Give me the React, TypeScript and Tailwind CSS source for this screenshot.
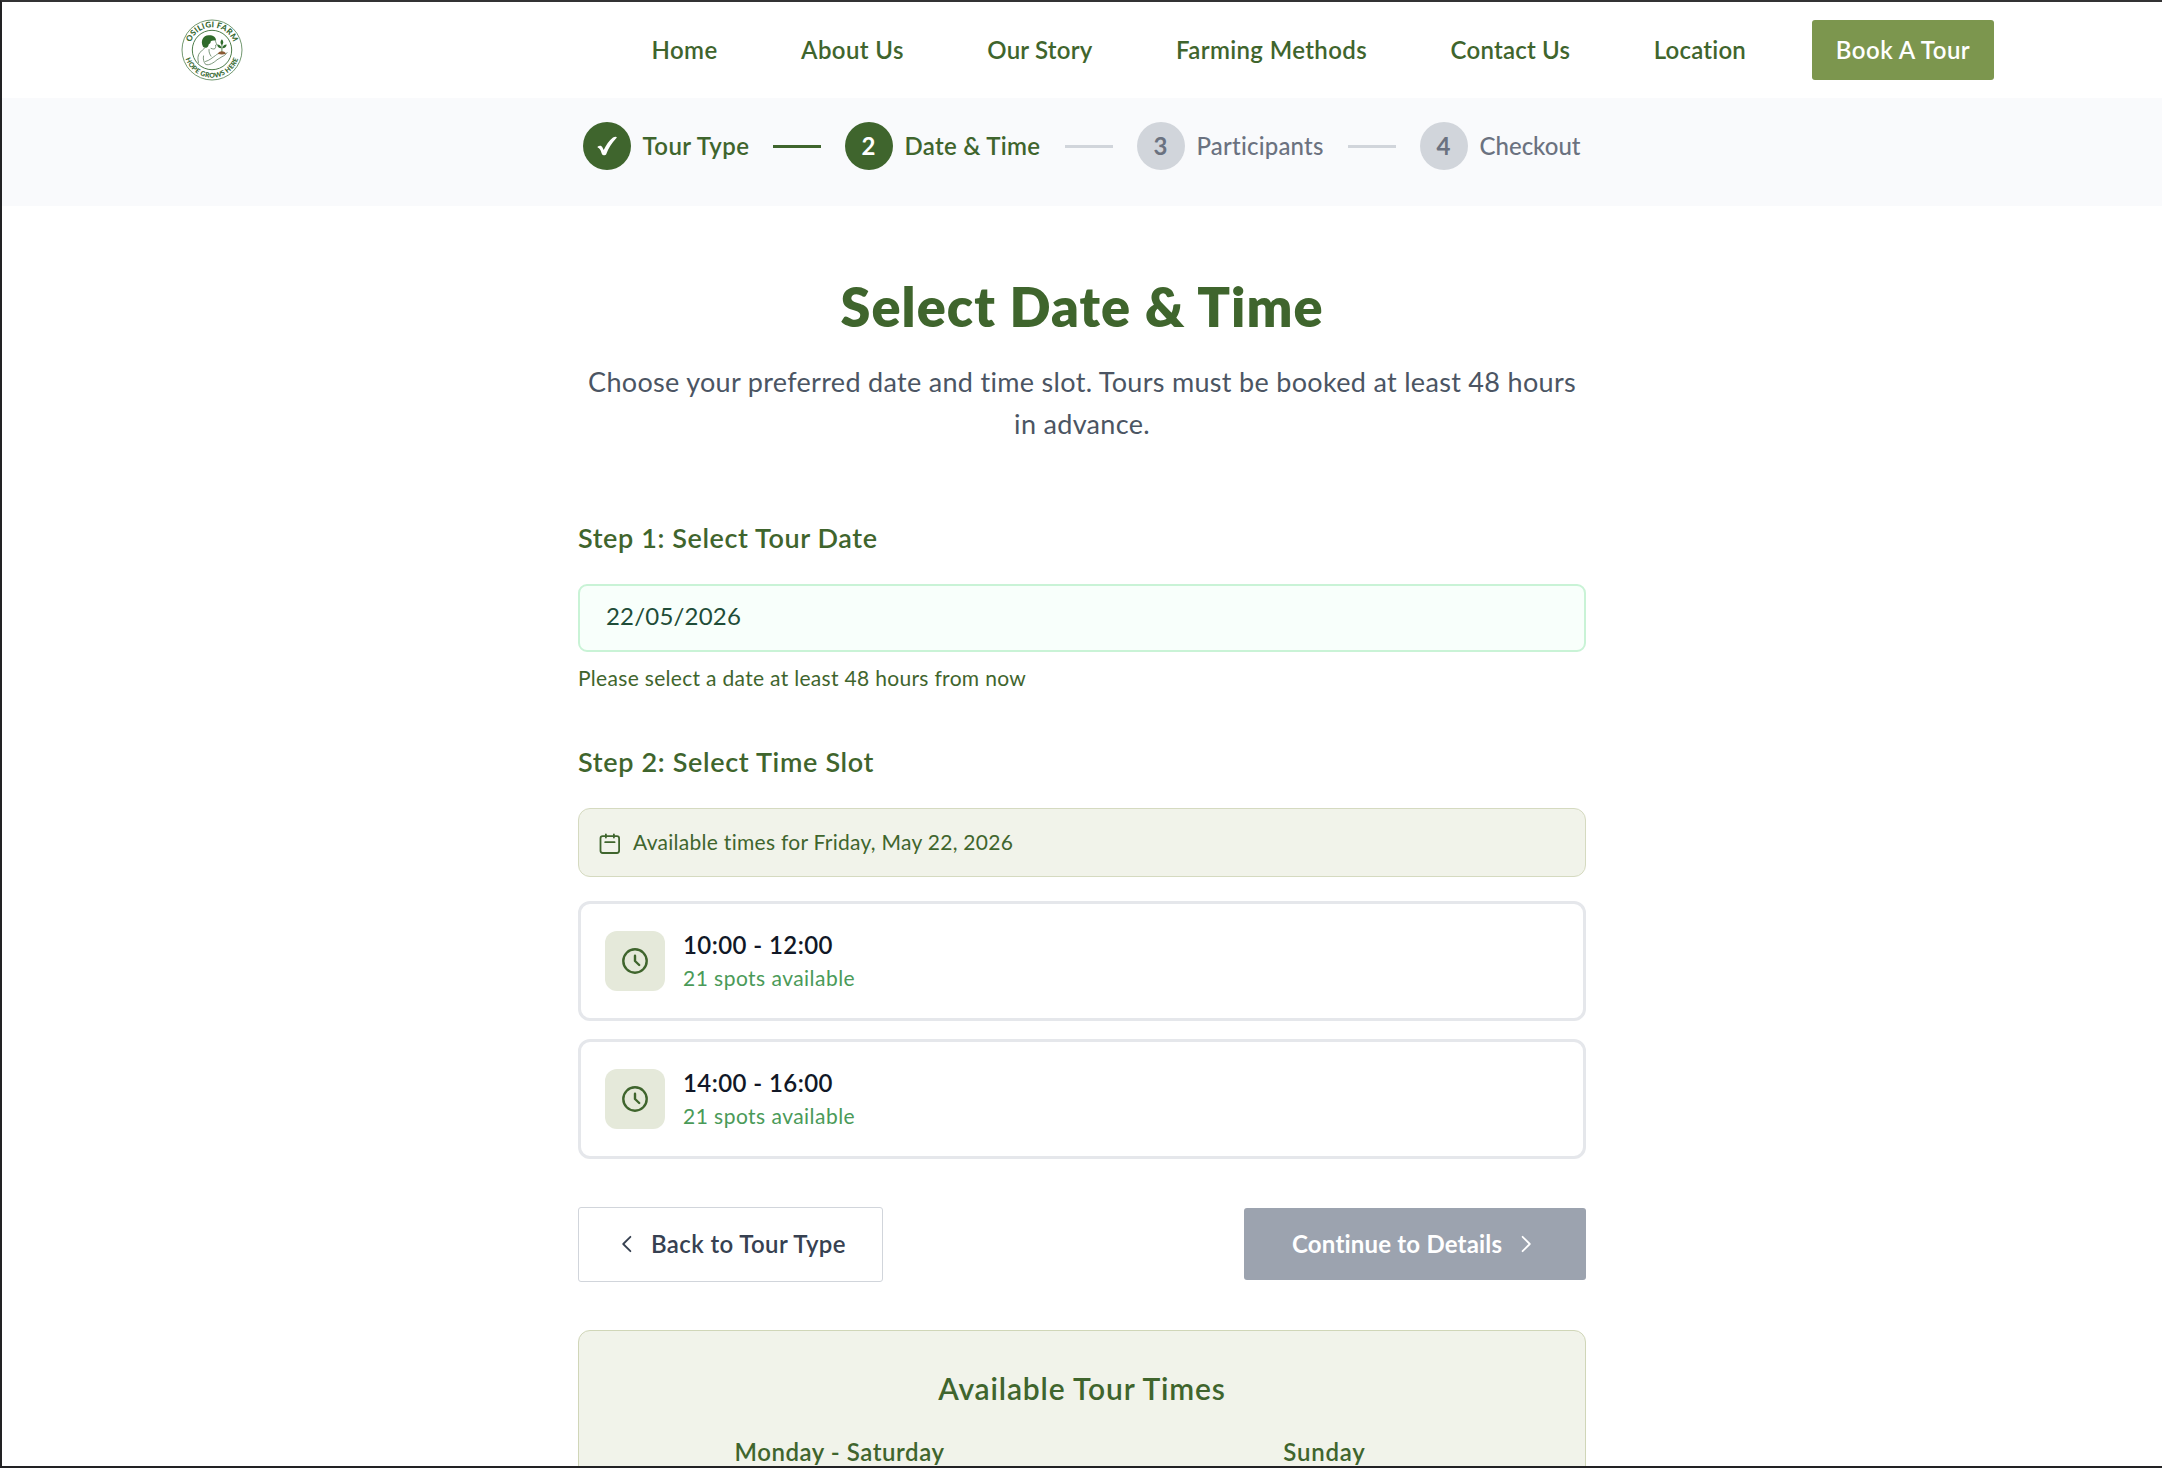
type StepStatus = "done" | "current" | "upcoming";

// Main navigation
const navLinks = [
  { label: "Home", className: "tracking-[0.4px]" },
  { label: "About Us", className: "tracking-[0.4px]" },
  { label: "Our Story", className: "tracking-[0.2px]" },
  { label: "Farming Methods", className: "tracking-[0.38px]" },
  { label: "Contact Us", className: "tracking-[0.22px]" },
  { label: "Location", className: "tracking-[0.2px]" },
];

// Booking steps
const steps: { label: string; status: StepStatus; className: string }[] = [
  { label: "Tour Type", status: "done", className: "w-[106px] tracking-[0.4px]" },
  { label: "Date & Time", status: "current", className: "w-[136px] tracking-[0.3px]" },
  { label: "Participants", status: "upcoming", className: "w-[127px] tracking-[0.2px]" },
  { label: "Checkout", status: "upcoming", className: "w-[102px]" },
];

const timeSlots = [
  { time: "10:00 - 12:00", spots: 21 },
  { time: "14:00 - 16:00", spots: 21 },
];

const schedule = [
  { days: "Monday - Saturday", className: "tracking-[0.55px]" },
  { days: "Sunday", className: "tracking-[0.8px]" },
];

function Logo() {
  return (
    <svg viewBox="0 0 62 62" className="w-[62px] h-[62px]" fill="none">
      <defs>
        <path id="logo-top" d="M8.4 31a22.6 22.6 0 0 1 45.2 0" />
        <path id="logo-bottom" d="M3.3 31a27.7 27.7 0 0 0 55.4 0" />
      </defs>
      <circle cx="31" cy="31" r="30" stroke="#4d7c4a" strokeWidth="0.8" />
      <circle cx="31" cy="31" r="19.7" stroke="#4d7c4a" strokeWidth="1" />
      <text fill="#35682f" fontSize="8" fontWeight="900" fontFamily="Lato, sans-serif" textAnchor="middle">
        <textPath href="#logo-top" startOffset="50%" textLength="55">
          OSILIGI FARM
        </textPath>
      </text>
      <text fill="#35682f" fontSize="6.8" fontWeight="900" fontFamily="Lato, sans-serif" textAnchor="middle">
        <textPath href="#logo-bottom" startOffset="50%" textLength="69">
          HOPE GROWS HERE
        </textPath>
      </text>
      {/* Farmer */}
      <path
        d="M22 27.8C19.2 22 21.8 16.6 27.8 16.3c4-.2 7 1.6 7.2 4.7-2 .9-3.8.3-5.2 1.2-.2 1.8-.8 2.6-2 3-.3 1.6-.8 2.6-1.9 3.3-1.4.6-2.8.3-3.9-.7z"
        fill="#2f6b2b"
      />
      <g stroke="#5c7d5c" strokeWidth="0.8" strokeLinecap="round" strokeLinejoin="round">
        <path d="M34.5 21.5c-.2 1.4 1 2.900 1.3 4.100l-1.200.5c.3 1.700 0 3.800-1.700 3.900-1.200 0-2.100-.2-2.900-.6" />
        <path d="M23.500 29c-1 2-3.200 2.800-4.600 4.500-2.200 2.600-2.500 6.500-1.400 10" />
        <path d="M28 30.500c-.3 2.500.8 5 2 6.700" />
        <path d="M22.500 37c-.6 3 .2 6 2 8.300 3.500 1.700 8.500-1.800 11.500-4.500l5-3.100c2-.9 4-2.200 5-4" />
        <path d="M24.500 42.500c4-1 7-4 10-6 1.500-1.400 3-2.200 4.500-2.200" />
      </g>
      {/* Seedling */}
      <path d="M40.900 33v-8" stroke="#2f6b2b" strokeWidth="0.8" />
      <path
        d="M40.900 26c-2-1.800-1.800-4 0-5.800 1.800 1.800 2 4 0 5.800zM40.500 29.300c-2.800 0-4.200-1.500-4.400-3.800 2.600 0 4.100 1.300 4.400 3.800zM41.300 29.300c2.800 0 4.200-1.500 4.400-3.800-2.600 0-4.100 1.300-4.400 3.800z"
        fill="#2f6b2b"
      />
      <path d="M36.800 34.700c1-1.700 2.500-2.400 4.100-2.400s3.100.7 4.100 2.400c-2.400.9-5.800.9-8.200 0z" fill="#8a5a33" />
    </svg>
  );
}

function ChevronIcon({ className }: { className?: string }) {
  return (
    <svg viewBox="0 0 24 24" fill="none" stroke="currentColor" strokeWidth="1.8" strokeLinecap="round" strokeLinejoin="round" className={className}>
      <path d="M15.4 4.8 8.2 12l7.2 7.2" />
    </svg>
  );
}

function CalendarIcon() {
  return (
    <svg viewBox="0 0 22 22" fill="none" stroke="currentColor" strokeWidth="1.8" strokeLinecap="round" className="w-[22px] h-[22px]">
      <rect x="1.5" y="3.2" width="18.6" height="16.8" rx="2.2" />
      <path d="M6.9 1.3v3.200M14.9 1.3v3.200M6.2 9.200h9.400" />
    </svg>
  );
}

function ClockIcon() {
  return (
    <svg viewBox="0 0 30 30" fill="none" stroke="currentColor" strokeWidth="2.4" strokeLinecap="round" strokeLinejoin="round" className="w-[30px] h-[30px]">
      <circle cx="15" cy="15" r="11.7" />
      <path d="M15 9.700V15l4.200 4" />
    </svg>
  );
}

function Step({ index, label, status, className }: { index: number; label: string; status: StepStatus; className: string }) {
  const active = status !== "upcoming";
  return (
    <div className="flex items-center gap-3">
      <div
        className={`w-12 h-12 rounded-full flex items-center justify-center pb-px text-2xl font-bold ${
          active ? "bg-[#3f652d] text-white" : "bg-[#d1d5db] text-[#6b7280]"
        }`}
      >
        {status === "done" ? (
          <svg viewBox="0 0 24 24" className="w-6 h-6" fill="currentColor">
            <path d="M2.800 12.500c1.800-1.300 3.900-.9 4.700.9l1.200 2.700c2.300-5 5.400-9.700 9.300-12.600 1.200-.8 3.800-1.100 3.800-.2 0 .5-.5.900-.8 1.300-4.200 4.400-7.500 9.800-9.800 15.600-.5 1.100-3.400 1.500-4 .3-1.200-2.300-1.500-5.700-4.100-6.700-.6-.2-.8-.8-.3-1.300z" />
          </svg>
        ) : (
          index
        )}
      </div>
      <span className={`text-2xl whitespace-nowrap ${active ? "font-semibold text-[#3f652d]" : "font-medium text-[#6b7280]"} ${className}`}>
        {label}
      </span>
    </div>
  );
}

export default function App() {
  return (
    <div className="h-screen overflow-hidden bg-white border-t-2 border-l-2 border-b-2 border-t-[#333334] border-l-[#222224] border-b-[#222224] font-['Lato',sans-serif] text-[#3f652d]">
      <header className="h-24 w-[1824px] mx-auto flex items-center justify-between">
        <div className="pl-[11px]">
          <Logo />
        </div>
        <nav className="flex items-center">
          <ul className="flex items-center gap-[83.5px] mr-[66px] pb-px text-2xl font-semibold">
            {navLinks.map((link) => (
              <li key={link.label} className={`whitespace-nowrap ${link.className}`}>
                {link.label}
              </li>
            ))}
          </ul>
          <button className="w-[182px] h-[60px] pb-px rounded-[3px] bg-[#7c964e] text-white text-2xl font-semibold tracking-[0.5px]">
            Book A Tour
          </button>
        </nav>
      </header>

      {/* Progress steps */}
      <section className="bg-[#f9fafc] pt-6 pb-9 flex items-center justify-center gap-6">
        {steps.map((step, index) => (
          <div key={step.label} className="flex items-center gap-6">
            {index > 0 && (
              <div className={`w-12 h-[3px] ${step.status === "upcoming" ? "bg-[#d1d5db]" : "bg-[#3f652d]"}`} />
            )}
            <Step index={index + 1} {...step} />
          </div>
        ))}
      </section>

      <main className="w-[1008px] mx-auto pt-[71px]">
        <div className="text-center">
          <h1 className="text-[54px] leading-[60px] font-extrabold tracking-[1.05px]">Select Date &amp; Time</h1>
          <p className="mt-6 text-[27px] leading-[42px] tracking-[0.31px] text-[#4b5563]">
            Choose your preferred date and time slot. Tours must be booked at least 48 hours in advance.
          </p>
        </div>

        {/* Tour date */}
        <h2 className="mt-[72px] text-[27px] leading-[42px] font-semibold tracking-[0.6px]">Step 1: Select Tour Date</h2>
        <div className="mt-[25px] h-[67.5px] flex items-center pl-[26px] pb-[3px] rounded-[9px] border-2 border-[#c9f3d6] bg-[#f8fffb] text-2xl tracking-[0.2px] text-[#1f4d38]">
          22/05/2026
        </div>
        <p className="mt-[11.5px] text-[21px] leading-[30px] tracking-[0.31px]">Please select a date at least 48 hours from now</p>

        {/* Time slots */}
        <h2 className="mt-[47.5px] text-[27px] leading-[42px] font-semibold tracking-[0.66px]">Step 2: Select Time Slot</h2>
        <div className="mt-[25px] h-[69px] flex items-center gap-3 pl-5 rounded-xl border-[1.5px] border-[#d5dac0] bg-[#f1f3ea]">
          <div className="pt-[3px]">
            <CalendarIcon />
          </div>
          <span className="text-[21px] tracking-[0.28px]">Available times for Friday, May 22, 2026</span>
        </div>
        <div className="mt-6 flex flex-col gap-[18px]">
          {timeSlots.map((slot) => (
            <div key={slot.time} className="h-[120px] flex items-center gap-[18px] px-6 rounded-xl border-3 border-[#e5e7eb]">
              <div className="w-[60px] h-[60px] flex items-center justify-center rounded-xl bg-[#e5e9da]">
                <ClockIcon />
              </div>
              <div className="pb-px">
                <p className="text-2xl leading-9 font-semibold tracking-[0.42px] text-[#111827]">{slot.time}</p>
                <p className="text-[21px] leading-[30px] tracking-[0.46px] text-[#4a9a58]">{slot.spots} spots available</p>
              </div>
            </div>
          ))}
        </div>

        {/* Actions */}
        <div className="mt-12 flex items-center justify-between">
          <button className="h-[75px] w-[305px] flex items-center gap-3 pl-9 rounded-[3px] border-[1.5px] border-[#d1d5db] text-2xl font-semibold text-[#374151]">
            <ChevronIcon className="w-6 h-6" />
            <span className="pb-px tracking-[0.38px]">Back to Tour Type</span>
          </button>
          <button className="h-[72px] w-[342px] flex items-center gap-3 pl-12 rounded-[3px] bg-[#9ca3af] text-2xl font-bold text-white">
            <span className="pb-px tracking-[0.2px]">Continue to Details</span>
            <ChevronIcon className="w-6 h-6 rotate-180" />
          </button>
        </div>

        <section className="mt-12 h-[400px] px-9 pt-9 rounded-xl border-[1.5px] border-[#d0d6b8] bg-[#f1f3ea] text-center font-semibold">
          <h3 className="text-3xl leading-[42px] tracking-[0.85px]">Available Tour Times</h3>
          <div className="mt-[25px] grid grid-cols-2 gap-9 text-2xl leading-9">
            {schedule.map((item) => (
              <p key={item.days} className={item.className}>
                {item.days}
              </p>
            ))}
          </div>
        </section>
      </main>
    </div>
  );
}
